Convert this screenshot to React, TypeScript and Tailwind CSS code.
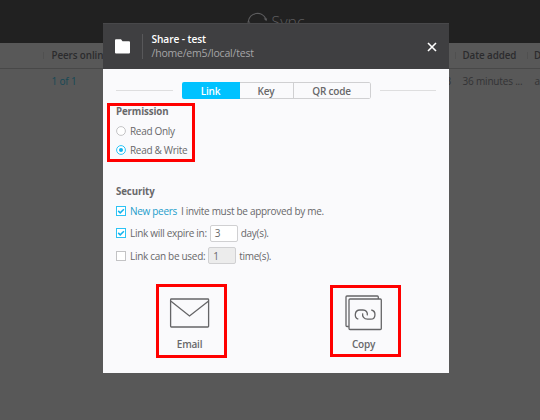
import React from "react";

function Check({ on }: { on?: boolean }) {
  return (
    <svg width="10" height="10" viewBox="0 0 10 10" fill="none" className="mr-[4px] shrink-0">
      <rect x="0.5" y="0.5" width="9" height="9" fill="#fff" stroke={on ? "#2cc3f5" : "#c3c3c5"} />
      {on && <path d="M2.2 4.9 4.2 6.9 7.9 3.2" stroke="#12b4ee" strokeWidth="1.5" />}
    </svg>
  );
}

function Radio({ on }: { on?: boolean }) {
  return (
    <svg width="10" height="10" viewBox="0 0 10 10" fill="none" className="mr-[4px] shrink-0">
      <circle cx="5" cy="5" r="4.4" fill="#fff" stroke={on ? "#2cc3f5" : "#c3c3c5"} />
      {on && <circle cx="5" cy="5" r="2" fill="#12b4ee" />}
    </svg>
  );
}

function Table() {
  return (
    <div className="text-[10px] tracking-[-0.18px] text-[#333335]">
      <div className="flex h-[26px] items-center border-b border-[#484848] text-[9.8px] font-semibold tracking-[-0.08px] text-[#2b2b2d]">
        <div className="ml-[43px] h-[7px] w-[8.5px] shrink-0 border-l border-[#505050]" />
        <span className="w-[403px] shrink-0 whitespace-nowrap">Peers online</span>
        <div className="h-[7px] w-[8px] shrink-0 border-l border-[#505050]" />
        <span className="w-[64.5px] shrink-0 whitespace-nowrap">Date added</span>
        <div className="h-[7px] w-[7px] shrink-0 border-l border-[#505050]" />
        <span className="shrink-0 whitespace-nowrap tracking-[-1px]">D</span>
      </div>
      <div className="flex h-[24px] items-center whitespace-nowrap">
        <span className="ml-[51.5px] w-[394px] shrink-0 text-[#164856]">1 of 1</span>
        <span className="w-[17px] shrink-0">3</span>
        <span className="w-[72px] shrink-0">36 minutes ...</span>
        <span className="shrink-0">a</span>
      </div>
    </div>
  );
}

export default function App() {
  return (
    <div className="relative h-[420px] w-[540px] overflow-hidden bg-[#585858] font-['Open_Sans',sans-serif] leading-none">
      <header className="flex h-[43px] items-start bg-[#212121] pt-[11px] pl-[247px] text-[#5c5c5e]">
        <svg width="22" height="22" viewBox="0 0 22 22" fill="none" stroke="currentColor" strokeWidth="1.2">
          <path d="M1.3 10.5A9.2 9.2 0 0 1 18.8 7.8M19.2 13A9.2 9.2 0 0 1 2 14" />
          <path d="M16.6 7.6H20.2L19.4 10.2Z" fill="currentColor" stroke="none" />
          <path d="M.4 11.8 1.2 9.2 3.4 11.4Z" fill="currentColor" stroke="none" />
        </svg>
        <span className="ml-[2.5px] pt-[3px] text-[16px] font-light">Sync</span>
      </header>
      <Table />

      <div className="absolute top-[23px] left-[103px] flex h-[350px] w-[346px] flex-col bg-[#fafafc] text-[10px] tracking-[-0.3px] text-[#68686a]">
        <div className="flex h-[46px] shrink-0 items-center border-t border-[#48484a] bg-[#3f3f41] pr-[12px] pl-[12px]">
          <svg width="15" height="15" viewBox="0 0 15 15" fill="#fff">
            <path d="M0 1.2Q0 .2 1 .2H6L7.5 2.2H14Q15 2.2 15 3.2V13.6Q15 14.6 14 14.6H1Q0 14.6 0 13.6Z" />
          </svg>
          <div className="ml-[12px] h-[25px] w-px bg-[#58585a]" />
          <div className="ml-[8.5px] flex-1 text-[#a5a5a7]">
            <div className="h-[13.5px] text-[10.2px] leading-[13px] font-semibold tracking-[-0.1px] text-white">Share - test</div>
            <div className="text-[10.5px] leading-[13px] tracking-[-0.2px]">/home/em5/local/test</div>
          </div>
          <svg width="10" height="10" viewBox="0 0 10 10" stroke="#fff" strokeWidth="1.6">
            <path d="M1 1 9 9M9 1 1 9" />
          </svg>
        </div>

        <div className="mt-[13px] flex h-[17px] shrink-0 items-center px-[13px]">
          <div className="h-px flex-1 bg-[#dededf]" />
          <div className="mx-[9px] flex h-[17px] w-[189px] overflow-hidden rounded-[2px] font-semibold tracking-[-0.2px]">
            <div className="flex w-[58px] items-center justify-center bg-[#00c2ff] text-white">Link</div>
            <div className="flex w-[54px] items-center justify-center border-y border-r border-[#d0d0d2]">Key</div>
            <div className="flex flex-1 items-center justify-center rounded-r-[2px] border-y border-r border-[#d0d0d2]">QR code</div>
          </div>
          <div className="h-px flex-1 bg-[#dededf]" />
        </div>

        <div className="flex flex-col px-[13px] pt-[2px]">
          <div className="flex h-[20px] items-center text-[9.7px] font-bold tracking-[-0.12px]">
            <span className="pt-px">Permission</span>
          </div>
          <div className="flex h-[19px] items-center"><Radio />Read Only</div>
          <div className="flex h-[20px] items-center"><Radio on />Read &amp; Write</div>
          <div className="mt-[21px] flex h-[20px] items-center text-[9.7px] font-bold tracking-[-0.12px]">
            <span className="pt-px">Security</span>
          </div>
          <div className="flex h-[19px] items-center whitespace-pre">
            <Check on /><span className="text-[#1d9dcb]">New peers</span><span className="ml-[4px]">I invite must be approved by me.</span>
          </div>
          <div className="mt-[1px] flex h-[24px] items-center">
            <Check on />Link will expire in:
            <div className="mr-[3px] ml-[3px] flex h-[17px] w-[28px] items-center rounded-[2px] border border-[#d0d0d2] bg-white pl-[4px]">3</div>
            day(s).
          </div>
          <div className="flex h-[21px] items-center">
            <Check />Link can be used:
            <div className="mr-[3px] ml-[3px] flex h-[17px] w-[28px] items-center rounded-[2px] border border-[#d0d0d2] bg-[#ececec] pl-[4px]">1</div>
            time(s).
          </div>
        </div>

        <div className="mt-[28px] flex justify-between pr-[66px] pl-[66px] font-semibold tracking-[-0.2px]">
          <div className="flex w-[41px] flex-col items-center">
            <svg width="41" height="38" viewBox="0 0 41 38" fill="none" stroke="#656567" strokeWidth="1.3">
              <rect x="1.6" y="5" width="38" height="28" rx="0.8" />
              <path d="M2 7.3 20.5 22 39.3 7.3" />
            </svg>
            <span className="mt-[7px]">Email</span>
          </div>
          <div className="flex w-[38px] flex-col items-center">
            <svg width="38" height="38" viewBox="0 0 38 38" fill="none" stroke="#656567" strokeWidth="1.3">
              <path d="M3.8 32.5H2Q1 32.5 1 31.5V3Q1 2 2 2H32.3Q33.3 2 33.3 3V5" />
              <rect x="4" y="5" width="32.3" height="30.5" rx="1" />
              <path d="M13.3 25.2C8.8 23.8 9.4 16 14.8 16H18C21 16 22.8 18.3 22.3 21.3M26.3 16C31.5 17 31 25.2 25.8 25.2H22.5C19 25.2 17 22.4 17.7 19.4" />
            </svg>
            <span className="mt-[7px] mr-[1px]">Copy</span>
          </div>
        </div>
      </div>

      <div className="absolute top-[103px] left-[107px] h-[59px] w-[88px] border-3 border-[#ff0000]" />
      <div className="absolute top-[284px] left-[156px] h-[74px] w-[71px] border-3 border-[#ff0000]" />
      <div className="absolute top-[285px] left-[330px] h-[72px] w-[71px] border-3 border-[#ff0000]" />
    </div>
  );
}
